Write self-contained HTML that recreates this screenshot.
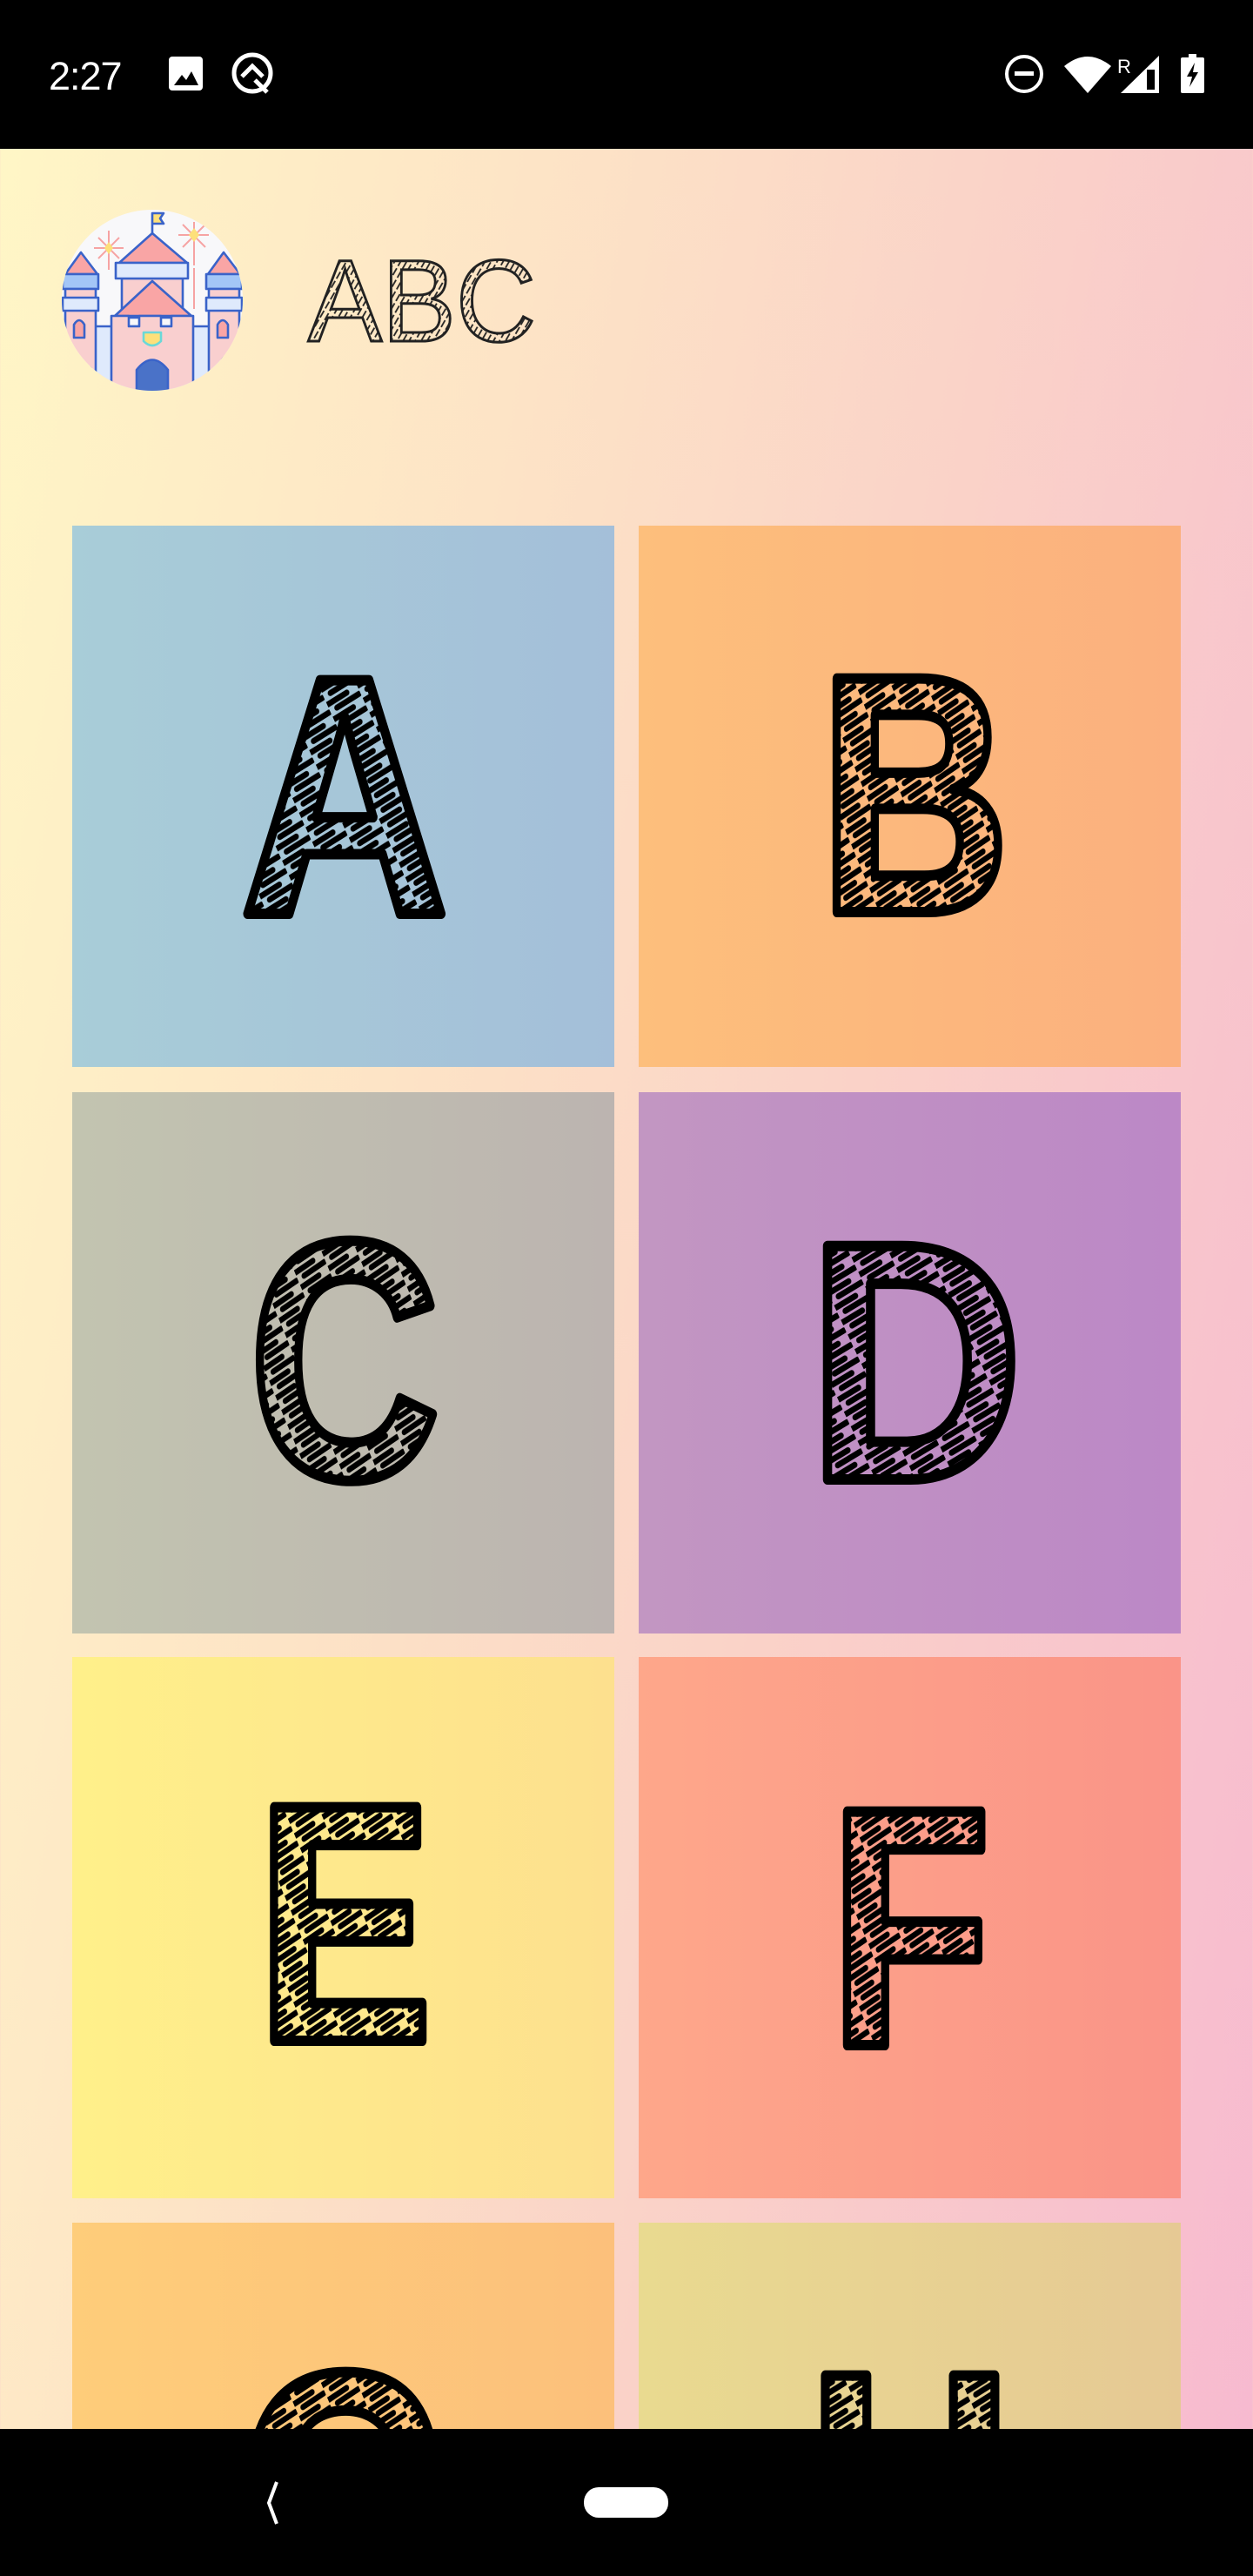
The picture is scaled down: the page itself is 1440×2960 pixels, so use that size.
<!DOCTYPE html>
<html><head><meta charset="utf-8"><style>
html{margin:0;padding:0;width:1440px;height:2960px;overflow:hidden}
body{margin:0;padding:0;width:1440px;height:2960px;position:relative;overflow:hidden;font-family:"Liberation Sans",sans-serif;
background:linear-gradient(100deg,#fff7c6 0%,#fde3c6 35%,#fad3c8 60%,#f7b9d0 100%);}
.sb{position:absolute;left:0;top:0;width:1440px;height:171px;background:#000}
.nav{position:absolute;left:0;top:2791px;width:1440px;height:169px;background:#000}
.t{position:absolute;width:623px;height:622px}
</style></head><body>
<div class="sb">
<div style="position:absolute;left:56px;top:62px;color:#fff;font-size:45px;letter-spacing:-1px">2:27</div>
<svg style="position:absolute;left:0;top:0" width="1440" height="171">
<rect x="194" y="65" width="39" height="39" rx="4" fill="#fff"/>
<path d="M200 98 L209 86 L214 92 L220 82 L228 98 Z" fill="#000"/>
<circle cx="290" cy="84" r="21" fill="none" stroke="#fff" stroke-width="5"/>
<path d="M278 88 L290 76 L302 88 M293 92 L307 106" fill="none" stroke="#fff" stroke-width="5"/>
<circle cx="1177" cy="85" r="20" fill="none" stroke="#fff" stroke-width="4"/>
<rect x="1166" y="82" width="22" height="5" fill="#fff"/>
<path d="M1223 76 Q1250 54 1277 76 L1250 107 Z" fill="#fff"/>
<text x="1284" y="84" fill="#fff" font-size="22" font-family="Liberation Sans">R</text>
<path d="M1288 107 L1332 64 L1332 107 Z" fill="#fff"/>
<rect x="1318" y="80" width="9" height="23" fill="#000"/>
<rect x="1366" y="62" width="9" height="5" fill="#fff"/>
<rect x="1357" y="66" width="27" height="41" rx="2" fill="#fff"/>
<path d="M1373 72 L1364 88 L1370 88 L1367 100 L1377 83 L1371 83 Z" fill="#000"/>
</svg>
</div>

<svg style="position:absolute;left:60px;top:230px" width="240" height="230" viewBox="0 0 240 230">
<defs><clipPath id="cc"><circle cx="115" cy="115" r="104"/></clipPath></defs>
<circle cx="115" cy="115" r="104" fill="#f8f8fa"/>
<g clip-path="url(#cc)" stroke="#3a63c9" stroke-width="2.6" stroke-linejoin="round">
<g stroke="#f6a3a3" stroke-width="2"><path d="M65 35 V80 M48 55 H82 M53 43 L77 67 M77 43 L53 67 M163 25 V75 M145 40 H180 M150 28 L176 54 M176 28 L150 54 M163 78 V125"/></g>
<path d="M65 48 L70 55 L65 62 L60 55Z M163 32 L169 40 L163 48 L157 40Z" fill="#fde07a" stroke="none"/>
<rect x="0" y="150" width="240" height="80" fill="#f9cfcf" stroke="none"/>
<rect x="45" y="145" width="150" height="85" fill="#dfeafc"/>
<path d="M115 38 V15 L128 15 L124 21 L128 27 L115 27" fill="#fde07a"/>
<rect x="80" y="90" width="70" height="45" fill="#f9cfcf"/>
<path d="M115 38 L77 72 H155 Z" fill="#f9a5a5"/>
<rect x="73" y="72" width="83" height="18" fill="#dfeafc"/>
<path d="M115 93 L72 133 H160 Z" fill="#f9a5a5"/>
<path d="M68 133 H88 V145 H100 V133 H125 V145 H137 V133 H162 V230 H68 Z" fill="#f9cfcf"/>
<path d="M105 152 H125 V162 Q115 172 105 162 Z" fill="#fde07a" stroke="#6ad8d8"/>
<path d="M97 230 V195 Q115 172 133 195 V230 Z" fill="#4a72c8"/>
<path d="M33 60 L15 85 H52 Z" fill="#f9a5a5"/>
<rect x="12" y="85" width="41" height="17" fill="#a3c6f7"/>
<rect x="15" y="102" width="35" height="128" fill="#f9cfcf"/>
<rect x="12" y="112" width="41" height="15" fill="#dfeafc"/>
<path d="M25 158 V143 Q31 133 37 143 V158Z" fill="#f9a5a5"/>
<path d="M197 60 L179 85 H216 Z" fill="#f9a5a5"/>
<rect x="177" y="85" width="41" height="17" fill="#a3c6f7"/>
<rect x="180" y="102" width="35" height="128" fill="#f9cfcf"/>
<rect x="177" y="112" width="41" height="15" fill="#dfeafc"/>
<path d="M190 158 V143 Q196 133 202 143 V158Z" fill="#f9a5a5"/>
</g>
</svg>

<svg style="position:absolute;left:0;top:0" width="1440" height="2960">
<defs>
<pattern id="h" patternUnits="userSpaceOnUse" width="46" height="19" patternTransform="rotate(-28)">
<path d="M0 5 H30 M10 14 H44" stroke="#000" stroke-width="7" stroke-linecap="round"/>
</pattern>
<pattern id="hs" patternUnits="userSpaceOnUse" width="12" height="6" patternTransform="rotate(-60)">
<path d="M0 3 H9" stroke="#222" stroke-width="1.8"/>
</pattern>
</defs>
<text x="354" y="392" font-size="134" font-family="Liberation Sans" fill="url(#hs)" stroke="#222" stroke-width="3" textLength="262" lengthAdjust="spacingAndGlyphs">ABC</text>
</svg>

<div class="t" style="left:83px;top:604px;background:linear-gradient(90deg,#a8cdd8,#a4bfd9)"></div>
<div class="t" style="left:734px;top:604px;background:linear-gradient(90deg,#fdbf7c,#fbb07e)"></div>
<div class="t" style="left:83px;top:1255px;background:linear-gradient(90deg,#c2c4b0,#bcb4b0)"></div>
<div class="t" style="left:734px;top:1255px;background:linear-gradient(90deg,#c296c2,#bc88c6)"></div>
<div class="t" style="left:83px;top:1904px;background:linear-gradient(90deg,#fff08a,#fde08e)"></div>
<div class="t" style="left:734px;top:1904px;background:linear-gradient(90deg,#fea78a,#fa9488)"></div>
<div class="t" style="left:83px;top:2554px;height:237px;background:linear-gradient(90deg,#fecd7a,#fcc07b)"></div>
<div class="t" style="left:734px;top:2554px;height:237px;background:linear-gradient(90deg,#e9da90,#e6c994)"></div>

<svg style="position:absolute;left:0;top:0" width="1440" height="2791" font-family="Liberation Sans" font-weight="bold" font-size="390">
<g fill="url(#h)" stroke="#000" stroke-width="12" stroke-linejoin="round" text-anchor="middle">
<text transform="translate(396,1050) scale(0.85,1)">A</text>
<text transform="translate(1051,1048) scale(0.78,1)">B</text>
<text transform="translate(396,1698) scale(0.78,1)">C</text>
<text transform="translate(1052,1700) scale(0.88,1)">D</text>
<text transform="translate(396,2345) scale(0.78,1)">E</text>
<text transform="translate(1046,2350) scale(0.78,1)">F</text>
<text transform="translate(396,2998) scale(0.8,1)">G</text>
<text transform="translate(1046,2998) scale(0.85,1)">H</text>
</g>
</svg>

<div class="nav">
<svg width="1440" height="169">
<path d="M318 61 L309 85 L318 109" fill="none" stroke="#fff" stroke-width="4"/>
<rect x="671" y="67" width="97" height="35" rx="17" fill="#fff"/>
</svg>
</div>
</body></html>
